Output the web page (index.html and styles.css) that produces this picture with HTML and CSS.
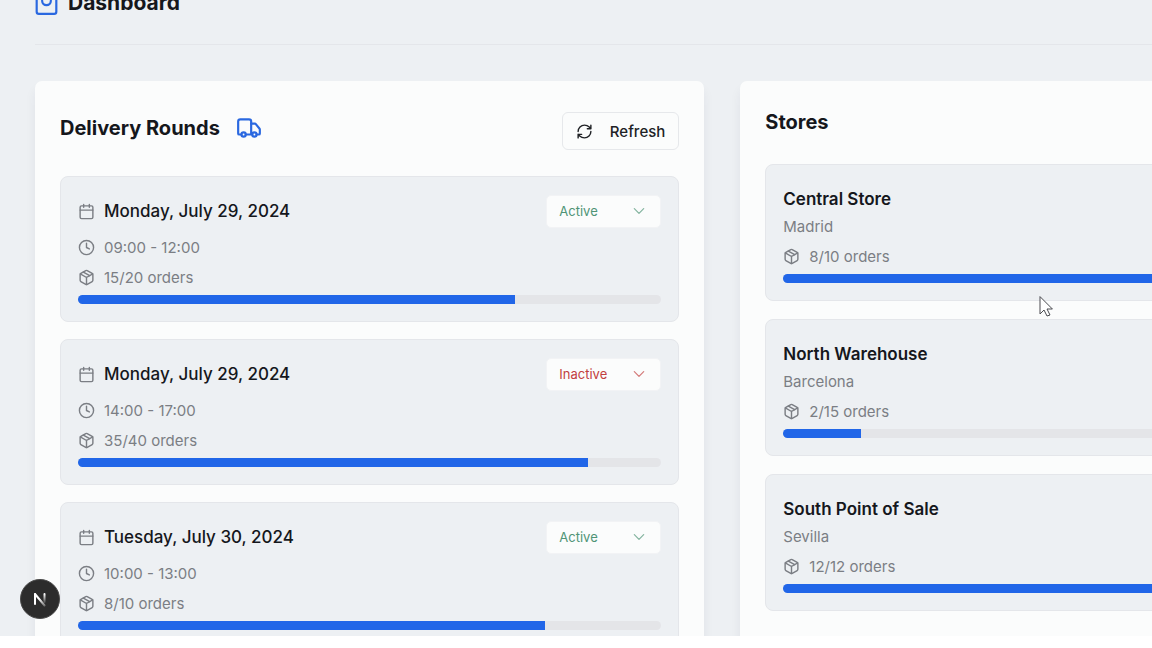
FILE: index.html
```html
<!DOCTYPE html>
<html lang="en">
<head>
  <meta charset="UTF-8" />
  <meta name="viewport" content="width=device-width, initial-scale=1.0" />
  <title>Dashboard</title>
  <link rel="stylesheet" href="styles.css">
</head>
<body>

  <!-- Shared icons -->
  <svg class="sprite" aria-hidden="true">
    <symbol id="icon-calendar" viewBox="0 0 24 24">
      <path d="M8 2v4M16 2v4M3 10h18" />
      <rect x="3" y="4" width="18" height="18" rx="2" />
    </symbol>
    <symbol id="icon-clock" viewBox="0 0 24 24">
      <circle cx="12" cy="12" r="10" />
      <path d="M12 6v6l4 2" />
    </symbol>
    <symbol id="icon-package" viewBox="0 0 24 24">
      <path d="m7.500 4.270 9 5.150" />
      <path d="M21 8a2 2 0 0 0-1-1.730l-7-4a2 2 0 0 0-2 0l-7 4A2 2 0 0 0 3 8v8a2 2 0 0 0 1 1.730l7 4a2 2 0 0 0 2 0l7-4A2 2 0 0 0 21 16Z" />
      <path d="m3.300 7 8.700 5 8.700-5M12 22V12" />
    </symbol>
    <symbol id="icon-chevron" viewBox="0 0 24 24">
      <path d="m4 8 8 8 8-8" />
    </symbol>
  </svg>

  <div class="viewport">
    <div class="page">
      <header class="page-header">
        <svg class="icon-bag" viewBox="2 1 20 22" aria-hidden="true">
          <path d="M6 2 3 6v14a2 2 0 0 0 2 2h14a2 2 0 0 0 2-2V6l-3-4ZM3 6h18M16 10a4 4 0 0 1-8 0" />
        </svg>
        <h1>Dashboard</h1>
      </header>

      <main class="columns">
        <!-- Delivery rounds -->
        <section class="panel">
          <div class="panel-header with-action">
            <h2>Delivery Rounds</h2>
            <svg class="icon-truck" viewBox="0 0 24 24" aria-hidden="true">
              <path d="M14 18V6a2 2 0 0 0-2-2H4a2 2 0 0 0-2 2v11a1 1 0 0 0 1 1h2M15 18H9" />
              <path d="M19 18h2a1 1 0 0 0 1-1v-3.650a1 1 0 0 0-.220-.624l-3.480-4.350A1 1 0 0 0 17.520 8H14" />
              <circle cx="17" cy="18" r="2" />
              <circle cx="7" cy="18" r="2" />
            </svg>
            <button type="button" class="refresh">
              <svg class="icon" viewBox="0 0 24 24" aria-hidden="true">
                <path d="M3 12a9 9 0 0 1 9-9 9.750 9.750 0 0 1 6.740 2.740L21 8M21 3v5h-5" />
                <path d="M21 12a9 9 0 0 1-9 9 9.750 9.750 0 0 1-6.740-2.740L3 16M8 16H3v5" />
              </svg>
              Refresh
            </button>
          </div>

          <div class="list">
            <article class="card">
              <div class="card-top">
                <svg class="icon"><use href="#icon-calendar" /></svg>
                <h3 class="date">Monday, July 29, 2024</h3>
                <div class="status active">
                  <select aria-label="Status of round 1">
                    <option selected>Active</option>
                    <option>Inactive</option>
                  </select>
                  <svg class="chevron"><use href="#icon-chevron" /></svg>
                </div>
              </div>
              <p class="meta"><svg class="icon"><use href="#icon-clock" /></svg>09:00 - 12:00</p>
              <p class="meta"><svg class="icon"><use href="#icon-package" /></svg>15/20 orders</p>
              <div class="progress"><div class="bar" style="width: 75%"></div></div>
            </article>

            <article class="card">
              <div class="card-top">
                <svg class="icon"><use href="#icon-calendar" /></svg>
                <h3 class="date">Monday, July 29, 2024</h3>
                <div class="status inactive">
                  <select aria-label="Status of round 2">
                    <option>Active</option>
                    <option selected>Inactive</option>
                  </select>
                  <svg class="chevron"><use href="#icon-chevron" /></svg>
                </div>
              </div>
              <p class="meta"><svg class="icon"><use href="#icon-clock" /></svg>14:00 - 17:00</p>
              <p class="meta"><svg class="icon"><use href="#icon-package" /></svg>35/40 orders</p>
              <div class="progress"><div class="bar" style="width: 87.5%"></div></div>
            </article>

            <article class="card">
              <div class="card-top">
                <svg class="icon"><use href="#icon-calendar" /></svg>
                <h3 class="date">Tuesday, July 30, 2024</h3>
                <div class="status active">
                  <select aria-label="Status of round 3">
                    <option selected>Active</option>
                    <option>Inactive</option>
                  </select>
                  <svg class="chevron"><use href="#icon-chevron" /></svg>
                </div>
              </div>
              <p class="meta"><svg class="icon"><use href="#icon-clock" /></svg>10:00 - 13:00</p>
              <p class="meta"><svg class="icon"><use href="#icon-package" /></svg>8/10 orders</p>
              <div class="progress"><div class="bar" style="width: 80%"></div></div>
            </article>
          </div>
        </section>

        <!-- Stores -->
        <section class="panel">
          <div class="panel-header">
            <h2>Stores</h2>
          </div>

          <div class="list stores">
            <article class="card">
              <h3 class="store-name">Central Store</h3>
              <p class="city">Madrid</p>
              <p class="meta"><svg class="icon"><use href="#icon-package" /></svg>8/10 orders</p>
              <div class="progress"><div class="bar" style="width: 80%"></div></div>
            </article>

            <article class="card">
              <h3 class="store-name">North Warehouse</h3>
              <p class="city">Barcelona</p>
              <p class="meta"><svg class="icon"><use href="#icon-package" /></svg>2/15 orders</p>
              <div class="progress"><div class="bar" style="width: 13.3%"></div></div>
            </article>

            <article class="card">
              <h3 class="store-name">South Point of Sale</h3>
              <p class="city">Sevilla</p>
              <p class="meta"><svg class="icon"><use href="#icon-package" /></svg>12/12 orders</p>
              <div class="progress"><div class="bar" style="width: 100%"></div></div>
            </article>
          </div>
        </section>
      </main>
    </div>

    <!-- Dev tools badge -->
    <button type="button" class="dev-badge" aria-label="Open dev tools">
      <svg viewBox="0 0 16 16" aria-hidden="true">
        <defs>
          <linearGradient id="fade" gradientUnits="userSpaceOnUse" x1="0" y1="8" x2="0" y2="15">
            <stop offset="0" stop-color="#fff" />
            <stop offset="1" stop-color="#fff" stop-opacity="0.3" />
          </linearGradient>
          <linearGradient id="fade-bar" gradientUnits="userSpaceOnUse" x1="0" y1="3" x2="0" y2="11">
            <stop offset="0" stop-color="#fff" />
            <stop offset="1" stop-color="#fff" stop-opacity="0.2" />
          </linearGradient>
        </defs>
        <path d="M3 13V3" stroke="#fff" />
        <path d="M3 3l9.500 11.500" stroke="url(#fade)" />
        <path d="M12.500 3v8" stroke="url(#fade-bar)" />
      </svg>
    </button>

    <!-- Mouse pointer -->
    <svg class="pointer" viewBox="0 0 14 22" aria-hidden="true">
      <path d="M1 1v17l4-4 3 6 3-1-3-6h5Z" />
    </svg>
  </div>

</body>
</html>
```
FILE: styles.css
```css
* {
  box-sizing: border-box;
}

body {
  margin: 0;
  background-color: #fff;
  color: #15171c;
  font-family: Inter, "Liberation Sans", sans-serif;
  font-size: 16px;
  overflow: hidden;
}

h1,
h2,
h3,
p {
  margin: 0;
}

svg {
  flex: none;
  fill: none;
  stroke: currentColor;
  stroke-width: 2;
  stroke-linecap: round;
  stroke-linejoin: round;
}

.sprite {
  display: none;
}

.viewport {
  position: relative;
  height: calc(100vh - 12px);
  overflow: hidden;
  background-color: #edf0f3;
}

/* page is scrolled down a little */
.page {
  margin-top: -49px;
  padding: 36px 35px;
}

.page-header {
  display: flex;
  align-items: center;
  gap: 10px;
  width: 120vw;
  padding-bottom: 25px;
  border-bottom: 1px solid #e4e6ea;
  margin-bottom: 36px;
}

.page-header h1 {
  font-size: 21px;
  line-height: 32px;
  font-weight: 700;
}

.icon-bag {
  width: 23px;
  height: 24px;
  color: #2a68e0;
}

.columns {
  display: grid;
  grid-template-columns: 58.1vw 58.1vw;
  gap: 36px;
}

.panel {
  padding: 25px;
  border-radius: 7px;
  background-color: #fbfcfc;
  box-shadow: 0 8px 12px rgba(30, 35, 60, 0.06);
}

.panel-header {
  display: flex;
  align-items: center;
  gap: 16px;
  min-height: 32px;
  margin-bottom: 26px;
}

.panel-header.with-action {
  min-height: 44px;
}

.panel-header h2 {
  font-size: 20px;
  line-height: 32px;
  font-weight: 700;
}

.icon-truck {
  width: 26px;
  height: 26px;
  color: #2a68e0;
}

.refresh {
  display: flex;
  align-items: center;
  align-self: flex-end;
  gap: 17px;
  height: 38px;
  margin-left: auto;
  padding: 0 13px;
  border: 1px solid #e6e8eb;
  border-radius: 6px;
  background-color: #fbfcfc;
  color: #202226;
  font-family: inherit;
  font-size: 15px;
  font-weight: 500;
  cursor: pointer;
}

.list {
  display: flex;
  flex-direction: column;
  gap: 17px;
}

.list.stores {
  gap: 18px;
}

.card {
  padding: 17px;
  border: 1px solid #e4e6ea;
  border-radius: 8px;
  background-color: #edf0f3;
}

.card-top {
  display: flex;
  align-items: center;
  gap: 9px;
  height: 34px;
  margin-bottom: 9px;
}

.card-top .icon {
  color: #7b7e84;
}

.date {
  font-size: 17px;
  font-weight: 500;
}

.store-name {
  font-size: 17px;
  line-height: 34px;
  font-weight: 600;
}

.icon {
  width: 17px;
  height: 17px;
}

.meta,
.city {
  margin-bottom: 9px;
  color: #7b7e84;
  font-size: 15px;
  line-height: 21px;
}

.meta {
  display: flex;
  align-items: center;
  gap: 9px;
}

.meta + .progress {
  margin-top: -2px;
}

.status {
  position: relative;
  width: 115px;
  margin-left: auto;
}

.status select {
  display: block;
  width: 100%;
  height: 33px;
  padding: 0 12px;
  appearance: none;
  border: 1px solid #f2f3f5;
  border-radius: 5px;
  background-color: #fbfcfc;
  color: inherit;
  font-family: inherit;
  font-size: 13px;
}

.status.active {
  color: #4f9476;
}

.status.inactive {
  color: #c2403f;
}

.chevron {
  position: absolute;
  top: 9px;
  right: 15px;
  width: 14px;
  height: 14px;
  opacity: 0.7;
  pointer-events: none;
}

.progress {
  height: 9px;
  border-radius: 5px;
  background-color: #e4e5e8;
  overflow: hidden;
}

.bar {
  height: 100%;
  background-color: #2166e8;
}

.dev-badge {
  position: absolute;
  left: 20px;
  bottom: 17px;
  display: flex;
  align-items: center;
  justify-content: center;
  width: 40px;
  height: 40px;
  padding: 0;
  border: 1px solid #4a4a4a;
  border-radius: 50%;
  background-color: #2c2c2c;
}

.dev-badge svg {
  width: 16px;
  height: 16px;
}

.pointer {
  position: absolute;
  top: 296px;
  left: 1039px;
  width: 14px;
  height: 22px;
  fill: #fff;
  stroke: #4a4b50;
  stroke-width: 1;
}
```
